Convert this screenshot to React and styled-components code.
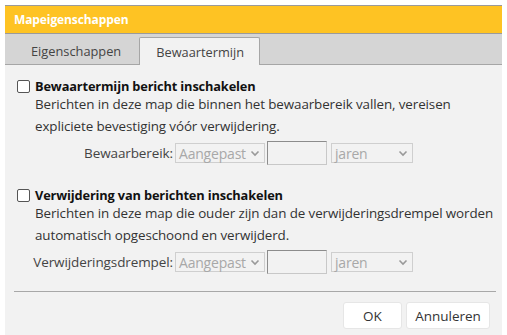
import React from "react";
import styled, { createGlobalStyle } from "styled-components";

const Global = createGlobalStyle`
  html, body {
    margin: 0;
    padding: 0;
    background: #fff;
  }
  body {
    font-family: "Open Sans", "Noto Sans", sans-serif;
    color: #333;
  }
`;

const Page = styled.div`
  width: 507px;
  height: 335px;
  padding: 5px 5px 0 5px;
  box-sizing: border-box;
  overflow: hidden;
`;

const Dialog = styled.section`
  width: 497px;
  height: 340px;
  background: #f2f2f2;
  border-top: 1px solid #9a9a9a;
  display: flex;
  flex-direction: column;
  & > * {
    flex: none;
  }
`;

const Header = styled.div`
  height: 27px;
  background: #fec323;
  border-bottom: 1px solid #9a9a9a;
  display: flex;
  align-items: center;
  padding-left: 9px;
  color: #fff;
  font-weight: 700;
  font-size: 12px;
  letter-spacing: -0.1px;
`;

const TabStrip = styled.div`
  height: 31px;
  background: #d5d5d5;
  border-bottom: 1px solid #a6a6a6;
  box-sizing: border-box;
  display: flex;
  align-items: flex-end;
  padding-left: 9px;
`;

const Tab = styled.div`
  height: ${(p) => (p.$active ? "28px" : "27px")};
  margin-bottom: ${(p) => (p.$active ? "-1px" : "0")};
  padding: ${(p) => (p.$active ? "0 15px 0 16px" : "0 17px 0 16px")};
  display: flex;
  align-items: center;
  font-size: 12.8px;
  color: #444;
  background: ${(p) => (p.$active ? "#f2f2f2" : "transparent")};
  border: ${(p) => (p.$active ? "1px solid #a6a6a6" : "1px solid transparent")};
  border-bottom: none;
  border-radius: 2px 2px 0 0;
  box-sizing: border-box;
`;

const Body = styled.div`
  padding: 12px 6px 0 12px;
  display: flex;
  flex-direction: column;
`;

const Section = styled.div`
  display: flex;
  flex-direction: column;
  margin-bottom: ${(p) => p.$gap || "0"};
`;

const CheckRow = styled.label`
  display: flex;
  align-items: center;
  gap: 5px;
  font-weight: 700;
  font-size: 12.8px;
  letter-spacing: -0.15px;
  color: #111;
  height: 18px;
  white-space: nowrap;
`;

const Box = styled.span`
  width: 11px;
  height: 11px;
  border: 1px solid #555;
  border-radius: 2px;
  background: #fff;
  flex: none;
`;

const Desc = styled.p`
  margin: -2px 0 0 18px;
  font-size: 13.4px;
  line-height: 22px;
  color: #333;
  letter-spacing: -0.1px;
  white-space: nowrap;
`;

const FieldRow = styled.div`
  display: flex;
  align-items: center;
  margin-top: 4px;
  font-size: 13.5px;
`;

const FieldLabel = styled.span`
  width: ${(p) => p.$w};
  text-align: right;
  padding-right: 2px;
  color: #444;
  flex: none;
  letter-spacing: -0.1px;
`;

const Select = styled.div`
  width: ${(p) => p.$w};
  height: 20px;
  box-sizing: border-box;
  border: 1px solid #cfcfcf;
  background: #f2f2f2;
  color: #a8a8a8;
  display: flex;
  align-items: center;
  justify-content: space-between;
  padding: 0 4px 0 3px;
  margin-right: ${(p) => p.$mr || "0"};
  font-size: 14px;
  letter-spacing: -0.2px;
  white-space: nowrap;
  svg {
    flex: none;
    margin-left: 2px;
  }
`;

const NumInput = styled.div`
  width: 60px;
  height: 24px;
  box-sizing: border-box;
  border: 1px solid #c8c8c8;
  border-top-color: #8c8c8c;
  border-left-color: #8c8c8c;
  background: #f2f2f2;
  margin-right: 4px;
`;

const Divider = styled.hr`
  border: none;
  border-top: 1px solid #a8a8a8;
  margin: 17px 0 0 -3px;
`;

const Footer = styled.div`
  display: flex;
  justify-content: flex-end;
  gap: 4px;
  padding: 10px 6px 0 0;
`;

const Button = styled.button`
  height: 27px;
  width: ${(p) => p.$w};
  background: #fff;
  border: 1px solid #e6e6e6;
  border-radius: 3px;
  font-family: inherit;
  font-size: 13.5px;
  color: #333;
  padding: 0;
`;

function Chevron() {
  return (
    <svg width="10" height="7" viewBox="0 0 10 7">
      <path d="M1.5 1.5 L5 5 L8.5 1.5" fill="none" stroke="#999" strokeWidth="1.6" />
    </svg>
  );
}

function Controls({ label, labelWidth }) {
  return (
    <FieldRow>
      <FieldLabel $w={labelWidth}>{label}</FieldLabel>
      <Select $w="90px" $mr="2px">
        Aangepast
        <Chevron />
      </Select>
      <NumInput />
      <Select $w="82px">
        jaren
        <Chevron />
      </Select>
    </FieldRow>
  );
}

export default function App() {
  return (
    <Page>
      <Global />
      <Dialog>
        <Header>Mapeigenschappen</Header>
        <TabStrip>
          <Tab>Eigenschappen</Tab>
          <Tab $active>Bewaartermijn</Tab>
        </TabStrip>
        <Body>
          <Section $gap="21px">
            <CheckRow>
              <Box />
              Bewaartermijn bericht inschakelen
            </CheckRow>
            <Desc>
              Berichten in deze map die binnen het bewaarbereik vallen, vereisen
              <br />
              expliciete bevestiging vóór verwijdering.
            </Desc>
            <Controls label="Bewaarbereik:" labelWidth="156px" />
          </Section>
          <Section>
            <CheckRow>
              <Box />
              Verwijdering van berichten inschakelen
            </CheckRow>
            <Desc>
              Berichten in deze map die ouder zijn dan de verwijderingsdrempel worden
              <br />
              automatisch opgeschoond en verwijderd.
            </Desc>
            <Controls label="Verwijderingsdrempel:" labelWidth="156px" />
          </Section>
          <Divider />
          <Footer>
            <Button $w="59px">OK</Button>
            <Button $w="84px">Annuleren</Button>
          </Footer>
        </Body>
      </Dialog>
    </Page>
  );
}
